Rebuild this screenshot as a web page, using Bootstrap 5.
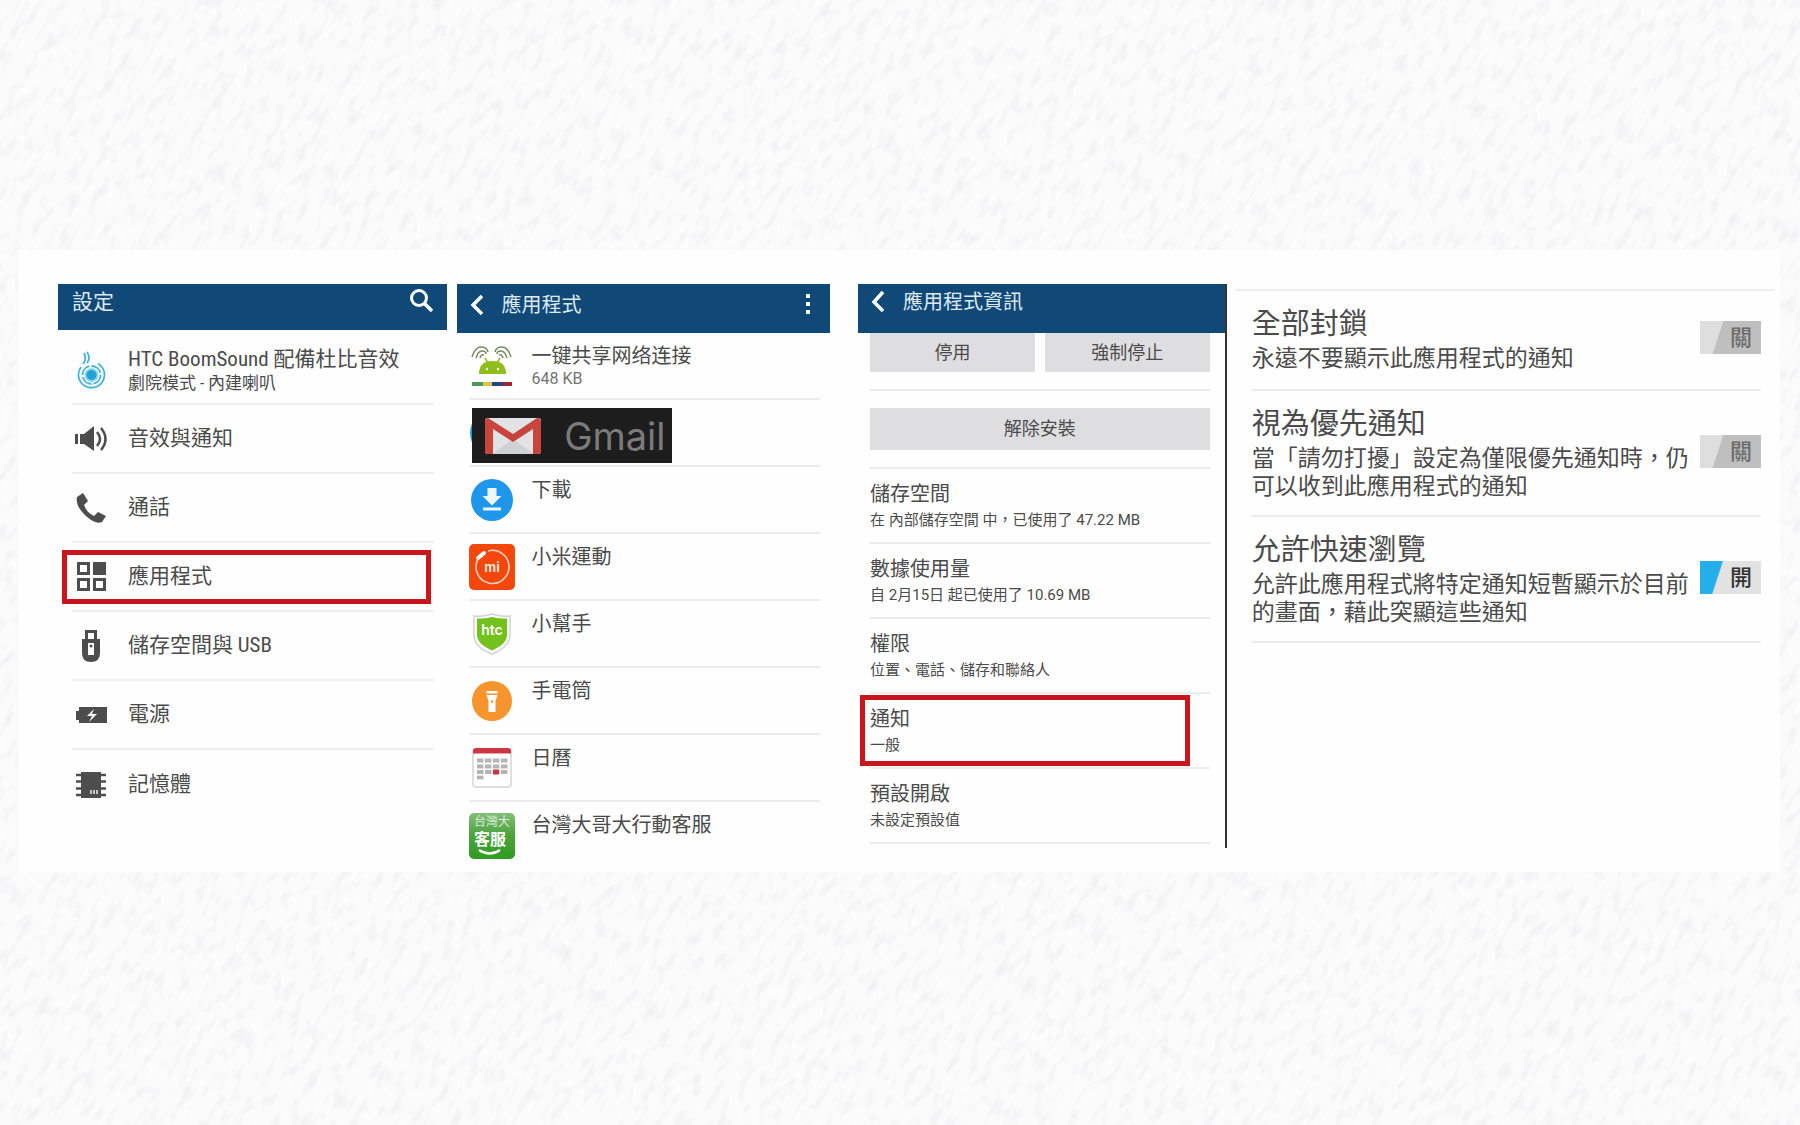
<!DOCTYPE html>
<html lang="zh-Hant">
<head>
<meta charset="utf-8">
<meta name="viewport" content="width=device-width, initial-scale=1">
<title>應用程式通知設定</title>
<link href="https://cdn.jsdelivr.net/npm/bootstrap@5.3.0/dist/css/bootstrap.min.css" rel="stylesheet">
<style>
body{background:#fbfbfc;color:#4b4b4b;font-family:Roboto,"Noto Sans CJK TC","Noto Sans CJK SC",sans-serif;min-height:100vh}
a,a:hover{color:inherit;text-decoration:none}
ul{list-style:none;margin:0;padding:0}
.paper{z-index:-1}
.sheet{background:#fefefe;margin:250px 20px 0 18px;padding:34px 6px 3px 40px}
.pane-settings{flex:389 1 0;margin-right:10px}
.pane-apps{flex:374 1 0;margin-right:28px}
.pane-info{flex:367 1 0;margin-right:9px;border-right:2px solid #333}
.pane-notify{flex:539 1 0}
.pane{min-width:0}
.topbar{background:#104877;color:#dfe9f2;line-height:28px}
.topbar h2{font-size:20px;line-height:28px;font-weight:400;margin:0}
.topbar button{border:0;background:none;padding:0;color:#fff;line-height:0}
.pane-settings .topbar{height:46px;padding:4px 13px 0 14px}
.pane-settings .topbar h2{font-size:21px}
.pane-apps .topbar{height:49px;padding:7px 16px 0 13px}
.pane-info .topbar{height:49px;padding:4px 12px 0 13px}
.topbar .back{width:14px;margin-right:18px}
.set-list{margin:6px 13px 0 14px;font-size:21px;font-family:"Roboto Condensed","Liberation Sans Narrow",Roboto,"Noto Sans CJK TC",sans-serif}
.set-list li{height:69px;border-bottom:2px solid #efefef;position:relative}
.set-list li:last-child,.app-list li:last-child{border-bottom:0}
.set-list a{height:100%;padding-left:3px;gap:20px}
.set-list svg{width:33px;height:38px;flex:none;fill:#4d4d4d}
.main-line{display:block;line-height:26px}
.set-list .sub-line{font-size:17px;line-height:22px;display:block}
.picked::after{content:"";position:absolute;border:5px solid #c9161d;pointer-events:none}
.set-list .picked::after{left:-10px;right:3px;top:7px;bottom:6px}
.app-list{margin:0 10px 0 12px;font-size:20px}
.app-list li{height:67px;border-bottom:2px solid #ececec;position:relative}
.app-list a{gap:17px;height:100%}
.app-list svg{width:46px;height:46px;flex:none;align-self:center}
.app-list .app-name{padding-top:10px}
.app-list .sub-line{font-size:16px;line-height:20px;display:block;color:#737373}
.gmail-tag{position:absolute;left:3px;top:8px;width:200px;height:55px;background:#1d1d1d;color:#7b7b7b;font:38px/54px Inter,sans-serif;padding:0 6px 0 12px}
.app-list .gmail-tag svg{width:58px;height:38px}
.info-body{margin:0 15px 0 12px}
.flat-btn{background:#dedee0;border:0;color:#4b4b4b;font-size:18px;line-height:26px;padding:6px 0}
.flat-btn:hover{background:#d2d2d4}
.rule-row{border-bottom:2px solid #ececec}
.pair{padding-bottom:17px;gap:10px}
.pair .flat-btn{height:39px;flex:1 1 0}
.solo{padding:17px 0 17px}
.solo .flat-btn{height:42px}
.info-list{font-size:20px}
.info-list li{height:75px;border-bottom:2px solid #ececec;padding-top:12px;position:relative}
.info-list .sub-line{display:block;font-size:15px;line-height:26px}
.info-list .picked::after{left:-10px;right:20px;top:1px;bottom:1px}
.pane-info{padding-bottom:4px}
.notify-list{border-top:2px solid #eee;margin-top:5px;padding:0 13px 0 16px}
.notify-list li{border-bottom:2px solid #ececec;padding:15px 0 14px}
.notify-title{display:block;font-size:29px;line-height:36px}
.notify-text{display:block;font-size:23px;line-height:28px;margin-top:3px}
.notify-list li:first-child{padding-bottom:16px}
.flip{position:relative;width:61px;height:33px;flex:none}
.flip input{appearance:none;width:100%;height:100%;margin:0;display:block;background:linear-gradient(108deg,#dedede 32%,#bfbfbf 33%)}
.flip input:checked{background:linear-gradient(108deg,#24aeea 31%,#e2e2e2 33%)}
.flip label{position:absolute;right:9px;top:4px;font-size:22px;line-height:26px;font-weight:500;color:#6c6c6c}
.flip input:checked + label{color:#333}
</style>
<script src="https://cdn.jsdelivr.net/npm/bootstrap@5.3.0/dist/js/bootstrap.bundle.min.js"></script>
</head>
<body>
<svg class="paper position-fixed top-0 start-0 w-100 h-100" aria-hidden="true">
  <filter id="grain" x="0" y="0" width="100%" height="100%">
    <feTurbulence type="fractalNoise" baseFrequency="0.05 0.12" numOctaves="3" seed="8"/>
    <feColorMatrix values="0 0 0 0 .6  0 0 0 0 .6  0 0 0 0 .64  .5 0 0 0 -.24"/>
  </filter>
  <g transform="rotate(-58)"><rect x="-1300" y="-200" width="2600" height="2600" filter="url(#grain)"/></g>
</svg>

<main class="sheet d-flex align-items-start">

  <section class="pane pane-settings">
    <header class="topbar d-flex justify-content-between align-items-start">
      <h2>設定</h2>
      <button type="button" aria-label="搜尋"><svg width="26" height="26" viewBox="0 0 26 26" fill="none" stroke="#fff"><circle cx="11" cy="10" r="7.5" stroke-width="3"/><path d="M16 15l8 8" stroke-width="3.6"/></svg></button>
    </header>
    <ul class="set-list">
      <li><a href="#" class="d-flex align-items-center">
        <svg viewBox="0 0 33 38"><g fill="none" stroke="#45b3d6" stroke-width="1.8"><circle cx="16.500" cy="24" r="9" stroke-dasharray="12 2"/><path d="M6 16a13 13 0 1 0 17-3.500"/><path d="M8 13Q12 8 9 2M12 12Q16 7 12 1"/></g><circle cx="16.500" cy="24" r="7" fill="#8fd4ea"/><circle cx="16.500" cy="24" r="5" fill="#20a3d4"/></svg>
        <span><span class="main-line">HTC BoomSound 配備杜比音效</span><span class="sub-line">劇院模式 - 內建喇叭</span></span></a></li>
      <li><a href="#" class="d-flex align-items-center">
        <svg viewBox="0 0 33 38"><path d="M0 14h3v10H0zM5 14h4l10-8v25L9 24H5z"/><path d="M22 12q6 7 0 14M26 8q9 11 0 22" fill="none" stroke="#4d4d4d" stroke-width="2.500"/></svg>
        <span>音效與通知</span></a></li>
      <li><a href="#" class="d-flex align-items-center">
        <svg viewBox="0 0 33 38"><path d="M2 8l6-4 5 8-4 4q3 8 10 11l4-4 8 4-4 6q-6 3-16-6Q0 17 2 8z"/></svg>
        <span>通話</span></a></li>
      <li class="picked"><a href="#" class="d-flex align-items-center">
        <svg viewBox="0 0 33 38"><path d="M18 4h13v13H18z"/><g fill="none" stroke="#4d4d4d" stroke-width="3"><path d="M3.500 5.500h10v10h-10zM3.500 21.500h10v10h-10zM19.500 21.500h10v10h-10z"/></g></svg>
        <span>應用程式</span></a></li>
      <li><a href="#" class="d-flex align-items-center">
        <svg viewBox="0 0 33 38"><path fill-rule="evenodd" d="M10 3h12v9h3v14q0 9-9 9t-9-9V12h3zM13 6v6h6V6zM13 16v12h6V16z"/><circle cx="16" cy="19" r="1.500"/></svg>
        <span>儲存空間與 USB</span></a></li>
      <li><a href="#" class="d-flex align-items-center">
        <svg viewBox="0 0 33 38"><path fill-rule="evenodd" d="M4 11h28v16H4v-3H1v-9h3zM19 13l-7 7h5l-3 6 8-8h-5z"/></svg>
        <span>電源</span></a></li>
      <li><a href="#" class="d-flex align-items-center">
        <svg viewBox="0 0 33 38"><path d="M6 6h20v26H6z"/><path d="M1 9h30M1 15.500h30M1 22.500h30M1 29h30" stroke="#4d4d4d" stroke-width="2.500"/><path d="M16 24v4M19 24v4M22 24v4" stroke="#eee" stroke-width="1.500"/></svg>
        <span>記憶體</span></a></li>
    </ul>
  </section>

  <section class="pane pane-apps">
    <header class="topbar d-flex align-items-start">
      <button type="button" class="back" aria-label="返回"><svg width="14" height="26" viewBox="0 0 14 26" fill="none" stroke="#fff" stroke-width="3.500"><path d="M12 5L3 14l9 9"/></svg></button>
      <h2 class="flex-grow-1">應用程式</h2>
      <button type="button" aria-label="更多"><svg width="12" height="26" viewBox="0 0 12 26" fill="#fff"><path d="M4 3h4v4H4zM4 11h4v4H4zM4 19h4v4H4z"/></svg></button>
    </header>
    <ul class="app-list">
      <li><a href="#" class="d-flex">
        <svg viewBox="0 0 46 46"><path d="M10 31q0-13 13.500-13T37 31z" fill="#8fbe1c"/><path d="M16 15l3 5M31 15l-3 5" stroke="#8fbe1c" stroke-width="1.500"/><circle cx="18" cy="26" r="1.200" fill="#fff"/><circle cx="29" cy="26" r="1.200" fill="#fff"/><g fill="none" stroke="#76885d" stroke-width="1.500"><path d="M3 14Q6 4 12 4t7 5M7 15q2-7 6-7t4 3M11 15q1-4 4-3M42 14Q39 4 33 4t-7 5M38 15q-2-7-6-7t-4 3M34 15q-1-4-4-3"/></g><path d="M3 39h11v4H3z" fill="#4c9a57"/><path d="M14 39h9v4h-9z" fill="#dfc04a"/><path d="M23 39h11v4H23z" fill="#27448d"/><path d="M34 39h9v4h-9z" fill="#9c2738"/></svg>
        <span class="app-name"><span class="main-line" lang="zh-Hans">一键共享网络连接</span><span class="sub-line">648 KB</span></span></a></li>
      <li><a href="#" class="d-flex" aria-label="Gmail">
        <svg viewBox="0 0 46 46"><circle cx="23" cy="23" r="22" fill="#2b96e2"/></svg>
        <span class="gmail-tag d-flex align-items-center justify-content-between"><svg viewBox="0 0 58 38"><rect x="1" y="1" width="56" height="36" rx="3" fill="#e2e3e5"/><path d="M8 37l21-15 21 15z" fill="#cfd1d3"/><path d="M4 1q-3 0-3 4v29q0 3 3 3h5V12l20 13 20-13v25h5q3 0 3-3V5q0-4-4-4L29 17z" fill="#c8453d"/></svg><span>Gmail</span></span></a></li>
      <li><a href="#" class="d-flex">
        <svg viewBox="0 0 46 46"><circle cx="23" cy="23" r="21" fill="#1e96ea"/><path d="M18.500 11h9v8h5L23 28.500 13.500 19h5zM14 30.500h18v3H14z" fill="#eef7ff"/></svg>
        <span class="app-name main-line">下載</span></a></li>
      <li><a href="#" class="d-flex">
        <svg viewBox="0 0 46 46"><rect width="46" height="46" rx="5" fill="#f4470c"/><path d="M19 7a16.500 16.500 0 1 1-10 8" fill="none" stroke="#ffd2bd" stroke-width="1.600"/><path d="M9 14l6-5" stroke="#fff" stroke-width="4" stroke-linecap="round"/><text x="23" y="28" text-anchor="middle" font-family="Inter,sans-serif" font-weight="700" font-size="13" fill="#ffe6da">mi</text></svg>
        <span class="app-name main-line">小米運動</span></a></li>
      <li><a href="#" class="d-flex">
        <svg viewBox="0 0 46 46"><path d="M23 3q9 3 18 2v19q0 12-18 19Q5 36 5 24V5q9 1 18-2z" fill="#fff" stroke="#d2d2d2" stroke-width="1.500"/><path d="M23 6q8 2 15 1.500V24q0 9-15 15.500Q8 33 8 24V7.500Q15 8 23 6z" fill="#73c11c"/><text x="23" y="24" text-anchor="middle" font-family="Inter,sans-serif" font-weight="600" font-size="14" fill="#fff">htc</text></svg>
        <span class="app-name main-line">小幫手</span></a></li>
      <li><a href="#" class="d-flex">
        <svg viewBox="0 0 46 46"><circle cx="23" cy="23" r="20" fill="#f6952d"/><path d="M17.500 13h11v2.500h-11zM17.500 17h11l-2 6v11h-7V23z" fill="#fff"/><circle cx="23" cy="23.500" r="1.200" fill="#f6952d"/></svg>
        <span class="app-name main-line">手電筒</span></a></li>
      <li><a href="#" class="d-flex">
        <svg viewBox="0 0 46 46"><rect x="4" y="4" width="38" height="38" rx="3" fill="#fff" stroke="#d4d4d4" stroke-width="1.500"/><path d="M4 8.500V6q0-3 3-3h32q3 0 3 3v2.500z" fill="#cb3740"/><path d="M8 15.500h31M8 21.500h31M8 27h31" stroke="#b4b4b4" stroke-width="3.800" stroke-dasharray="6.500 1.500"/><path d="M8 32.500h6.500" stroke="#b4b4b4" stroke-width="3.800"/><path d="M24 24.500h6v5h-6z" fill="#d0333a"/></svg>
        <span class="app-name main-line">日曆</span></a></li>
      <li><a href="#" class="d-flex">
        <svg viewBox="0 0 46 46"><defs><linearGradient id="leaf" x2="0" y2="1"><stop stop-color="#86bd7c"/><stop offset=".45" stop-color="#4ca53f"/><stop offset="1" stop-color="#2f9b20"/></linearGradient></defs><rect width="46" height="46" rx="5" fill="url(#leaf)"/><text x="23" y="13" text-anchor="middle" font-family="Noto Sans CJK TC,sans-serif" font-size="12" fill="#dcefd8">台灣大</text><text x="21" y="32" text-anchor="middle" font-family="Noto Sans CJK TC,sans-serif" font-weight="700" font-size="16" fill="#fff">客服</text><path d="M10 37q11 7 21 0" fill="none" stroke="#fff" stroke-width="2.500"/></svg>
        <span class="app-name main-line">台灣大哥大行動客服</span></a></li>
    </ul>
  </section>

  <section class="pane pane-info">
    <header class="topbar d-flex align-items-start">
      <button type="button" class="back" aria-label="返回"><svg width="14" height="26" viewBox="0 0 14 26" fill="none" stroke="#fff" stroke-width="3.500"><path d="M12 4L3 14l9 9"/></svg></button>
      <h2>應用程式資訊</h2>
    </header>
    <div class="info-body">
      <div class="rule-row pair d-flex">
        <button type="button" class="flat-btn">停用</button>
        <button type="button" class="flat-btn">強制停止</button>
      </div>
      <div class="rule-row solo">
        <button type="button" class="flat-btn w-100">解除安裝</button>
      </div>
      <ul class="info-list">
        <li><a href="#"><span class="main-line">儲存空間</span><span class="sub-line">在 內部儲存空間 中，已使用了 47.22 MB</span></a></li>
        <li><a href="#"><span class="main-line">數據使用量</span><span class="sub-line">自 2月15日 起已使用了 10.69 MB</span></a></li>
        <li><a href="#"><span class="main-line">權限</span><span class="sub-line">位置、電話、儲存和聯絡人</span></a></li>
        <li class="picked"><a href="#"><span class="main-line">通知</span><span class="sub-line">一般</span></a></li>
        <li><a href="#"><span class="main-line">預設開啟</span><span class="sub-line">未設定預設值</span></a></li>
      </ul>
    </div>
  </section>

  <section class="pane pane-notify">
    <ul class="notify-list">
      <li class="d-flex align-items-center justify-content-between">
        <div><span class="notify-title">全部封鎖</span><span class="notify-text">永遠不要顯示此應用程式的通知</span></div>
        <div class="flip mb-1"><input type="checkbox" id="block" aria-label="全部封鎖"><label for="block">關</label></div>
      </li>
      <li class="d-flex align-items-center justify-content-between">
        <div><span class="notify-title">視為優先通知</span><span class="notify-text">當「請勿打擾」設定為僅限優先通知時，仍可以收到此應用程式的通知</span></div>
        <div class="flip mb-1"><input type="checkbox" id="prio" aria-label="視為優先通知"><label for="prio">關</label></div>
      </li>
      <li class="d-flex align-items-center justify-content-between">
        <div><span class="notify-title">允許快速瀏覽</span><span class="notify-text">允許此應用程式將特定通知短暫顯示於目前的畫面，藉此突顯這些通知</span></div>
        <div class="flip mb-1"><input type="checkbox" id="peek" aria-label="允許快速瀏覽" checked><label for="peek">開</label></div>
      </li>
    </ul>
  </section>
</main>
</body>
</html>
